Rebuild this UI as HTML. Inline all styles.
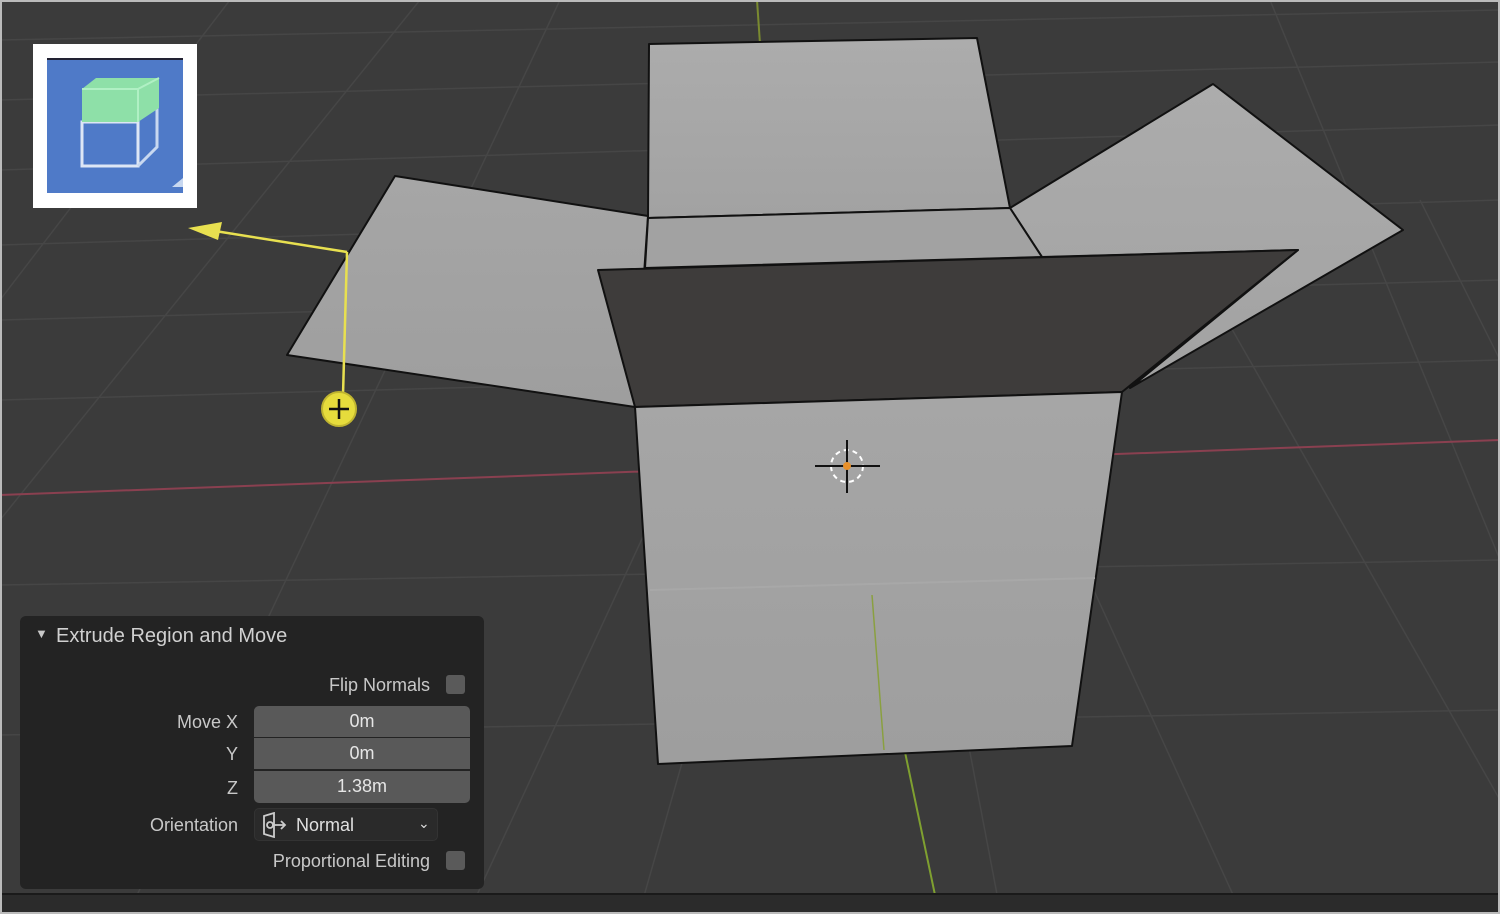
<!DOCTYPE html>
<html><head><meta charset="utf-8"><style>
html,body{margin:0;padding:0;background:#3b3b3b;}
#w{position:relative;width:1500px;height:914px;overflow:hidden;font-family:"Liberation Sans",sans-serif;}
svg{position:absolute;left:0;top:0}
.panel{position:absolute;left:20px;top:616px;width:464px;height:273px;background:#232323;border-radius:6px;color:#c8c8c8;font-size:18px;}
.t{position:absolute;}
.r{text-align:right}
.fld{position:absolute;left:234px;width:216px;background:#595959;color:#e6e6e6;text-align:center;font-size:18px;line-height:31px;height:31px;}
.cb{position:absolute;width:19px;height:19px;background:#5a5a5a;border-radius:3px;left:426px;}
</style></head><body><div id="w">
<svg width="1500" height="914" viewBox="0 0 1500 914">
<defs>
<linearGradient id="g1" x1="0" y1="0" x2="0" y2="1"><stop offset="0" stop-color="#acacac"/><stop offset="1" stop-color="#a2a2a2"/></linearGradient>
<linearGradient id="g2" x1="0" y1="0" x2="0" y2="1"><stop offset="0" stop-color="#a6a6a6"/><stop offset="1" stop-color="#9e9e9e"/></linearGradient>
</defs>
<rect width="1500" height="914" fill="#3b3b3b"/>
<g stroke="#464646" stroke-width="1.5" fill="none">
<path d="M0 40 L1500 10"/><path d="M0 100 L1500 62"/><path d="M0 170 L1500 125"/><path d="M0 245 L1500 200"/><path d="M0 320 L1500 280"/><path d="M0 400 L1500 360"/><path d="M0 585 L1500 560"/><path d="M0 735 L1500 710"/>
<path d="M0 300 L230 0"/><path d="M0 520 L420 0"/><path d="M130 910 L560 0"/><path d="M470 910 L660 500"/><path d="M640 910 L700 700"/><path d="M1000 910 L960 700"/><path d="M1240 910 L1080 560"/><path d="M1500 800 L1130 150"/><path d="M1500 560 L1270 0"/><path d="M1500 360 L1420 200"/>
</g>
<path d="M0 495 L1500 440" stroke="#8a4050" stroke-width="2"/>
<path d="M757 0 L760 44" stroke="#7a8a30" stroke-width="2"/>
<path d="M872 595 L935 895" stroke="#7fa030" stroke-width="2"/>
<g stroke="#111" stroke-width="2" stroke-linejoin="round">
<polygon points="395,176 648,216 635,407 287,355" fill="url(#g2)"/>
<polygon points="1010,208 1213,84 1403,230 1130,388 1298,250 1042,257" fill="url(#g1)"/>
<polygon points="649,44 977,38 1010,208 648,218" fill="url(#g1)"/>
<polygon points="648,218 1010,208 1042,257 645,268" fill="#a2a2a2"/>
<polygon points="598,270 1298,250 1122,392 635,407" fill="#3e3c3b"/>
<polygon points="635,407 1122,392 1072,746 658,764" fill="url(#g2)"/>
</g>
<path d="M650 590 L1095 578" stroke="#a8a8a8" stroke-width="2"/>
<path d="M872 595 L884 750" stroke="#8aa040" stroke-width="1.5"/>
<g stroke="#e8e050" stroke-width="2.5" fill="none"><path d="M347 252 L215 231"/><path d="M347 252 L343 395"/></g>
<polygon points="188,228 222,222 218,240" fill="#e8e050"/>
<circle cx="339" cy="409" r="17" fill="#e6dc3c" stroke="#bfb430" stroke-width="2"/>
<path d="M339 399 V419 M329 409 H349" stroke="#111" stroke-width="2.5"/>
<circle cx="847" cy="466" r="16" fill="none" stroke="#fff" stroke-width="2" stroke-dasharray="5 4"/>
<path d="M847 440 V493 M815 466 H880" stroke="#111" stroke-width="2"/>
<circle cx="847" cy="466" r="4" fill="#e8902a"/>
<rect x="0" y="895" width="1500" height="19" fill="#2b2b2b"/>
<rect x="0" y="893" width="1500" height="2" fill="#1a1a1a"/>
<rect x="1" y="1" width="1498" height="912" fill="none" stroke="#bbb" stroke-width="2"/>
<rect x="33" y="44" width="164" height="164" fill="#fff"/>
<rect x="47" y="58" width="136" height="135" fill="#4f7ac8"/>
<rect x="47" y="58" width="136" height="2" fill="#223"/>
<rect x="82" y="122" width="56" height="44" fill="none" stroke="#dde6f5" stroke-width="3"/>
<path d="M138 166 L157 147 V95" stroke="#c8d8f0" stroke-width="3" fill="none"/>
<polygon points="82,89 96,78 159,78 159,108 138,122 82,122" fill="#8ee0a8"/>
<path d="M82 89 H138 V122 M138 89 L159 78" stroke="#b0f0c4" stroke-width="2" fill="none"/>
<path d="M172 187 L183 178 V187 Z" fill="#c8d8f0"/>
</svg>
<div class="panel">
<div class="t" style="left:15px;top:10px;font-size:13px;">&#9660;</div>
<div class="t" style="left:36px;top:9px;font-size:20px;color:#d0d0d0">Extrude Region and Move</div>
<div class="t r" style="left:200px;width:210px;top:59px;">Flip Normals</div>
<div class="cb" style="top:59px"></div>
<div class="t r" style="left:100px;width:118px;top:96px;">Move X</div>
<div class="t r" style="left:100px;width:118px;top:128px;">Y</div>
<div class="t r" style="left:100px;width:118px;top:162px;">Z</div>
<div class="fld" style="top:90px;border-radius:5px 5px 0 0">0m</div>
<div class="fld" style="top:122px;">0m</div>
<div class="fld" style="top:155px;height:32px;border-radius:0 0 5px 5px">1.38m</div>
<div class="t r" style="left:60px;width:158px;top:199px;">Orientation</div>
<div class="t" style="left:234px;top:192px;width:182px;height:31px;background:#2a2a2a;border:1px solid #333;border-radius:5px;"></div>
<svg style="left:240px;top:196px" width="30" height="26" viewBox="0 0 30 26"><path d="M4 4 L14 1 V25 L4 22 Z" fill="none" stroke="#ccc" stroke-width="1.8"/><circle cx="10" cy="13" r="3" fill="none" stroke="#ccc" stroke-width="1.8"/><path d="M13 13 H25 M21 9 L25 13 L21 17" fill="none" stroke="#ccc" stroke-width="1.8"/></svg>
<div class="t" style="left:276px;top:199px;color:#e0e0e0">Normal</div>
<div class="t" style="left:398px;top:199px;font-size:14px;color:#ddd">&#8964;</div>
<div class="t r" style="left:150px;width:260px;top:235px;">Proportional Editing</div>
<div class="cb" style="top:235px"></div>
</div>
</div></body></html>
